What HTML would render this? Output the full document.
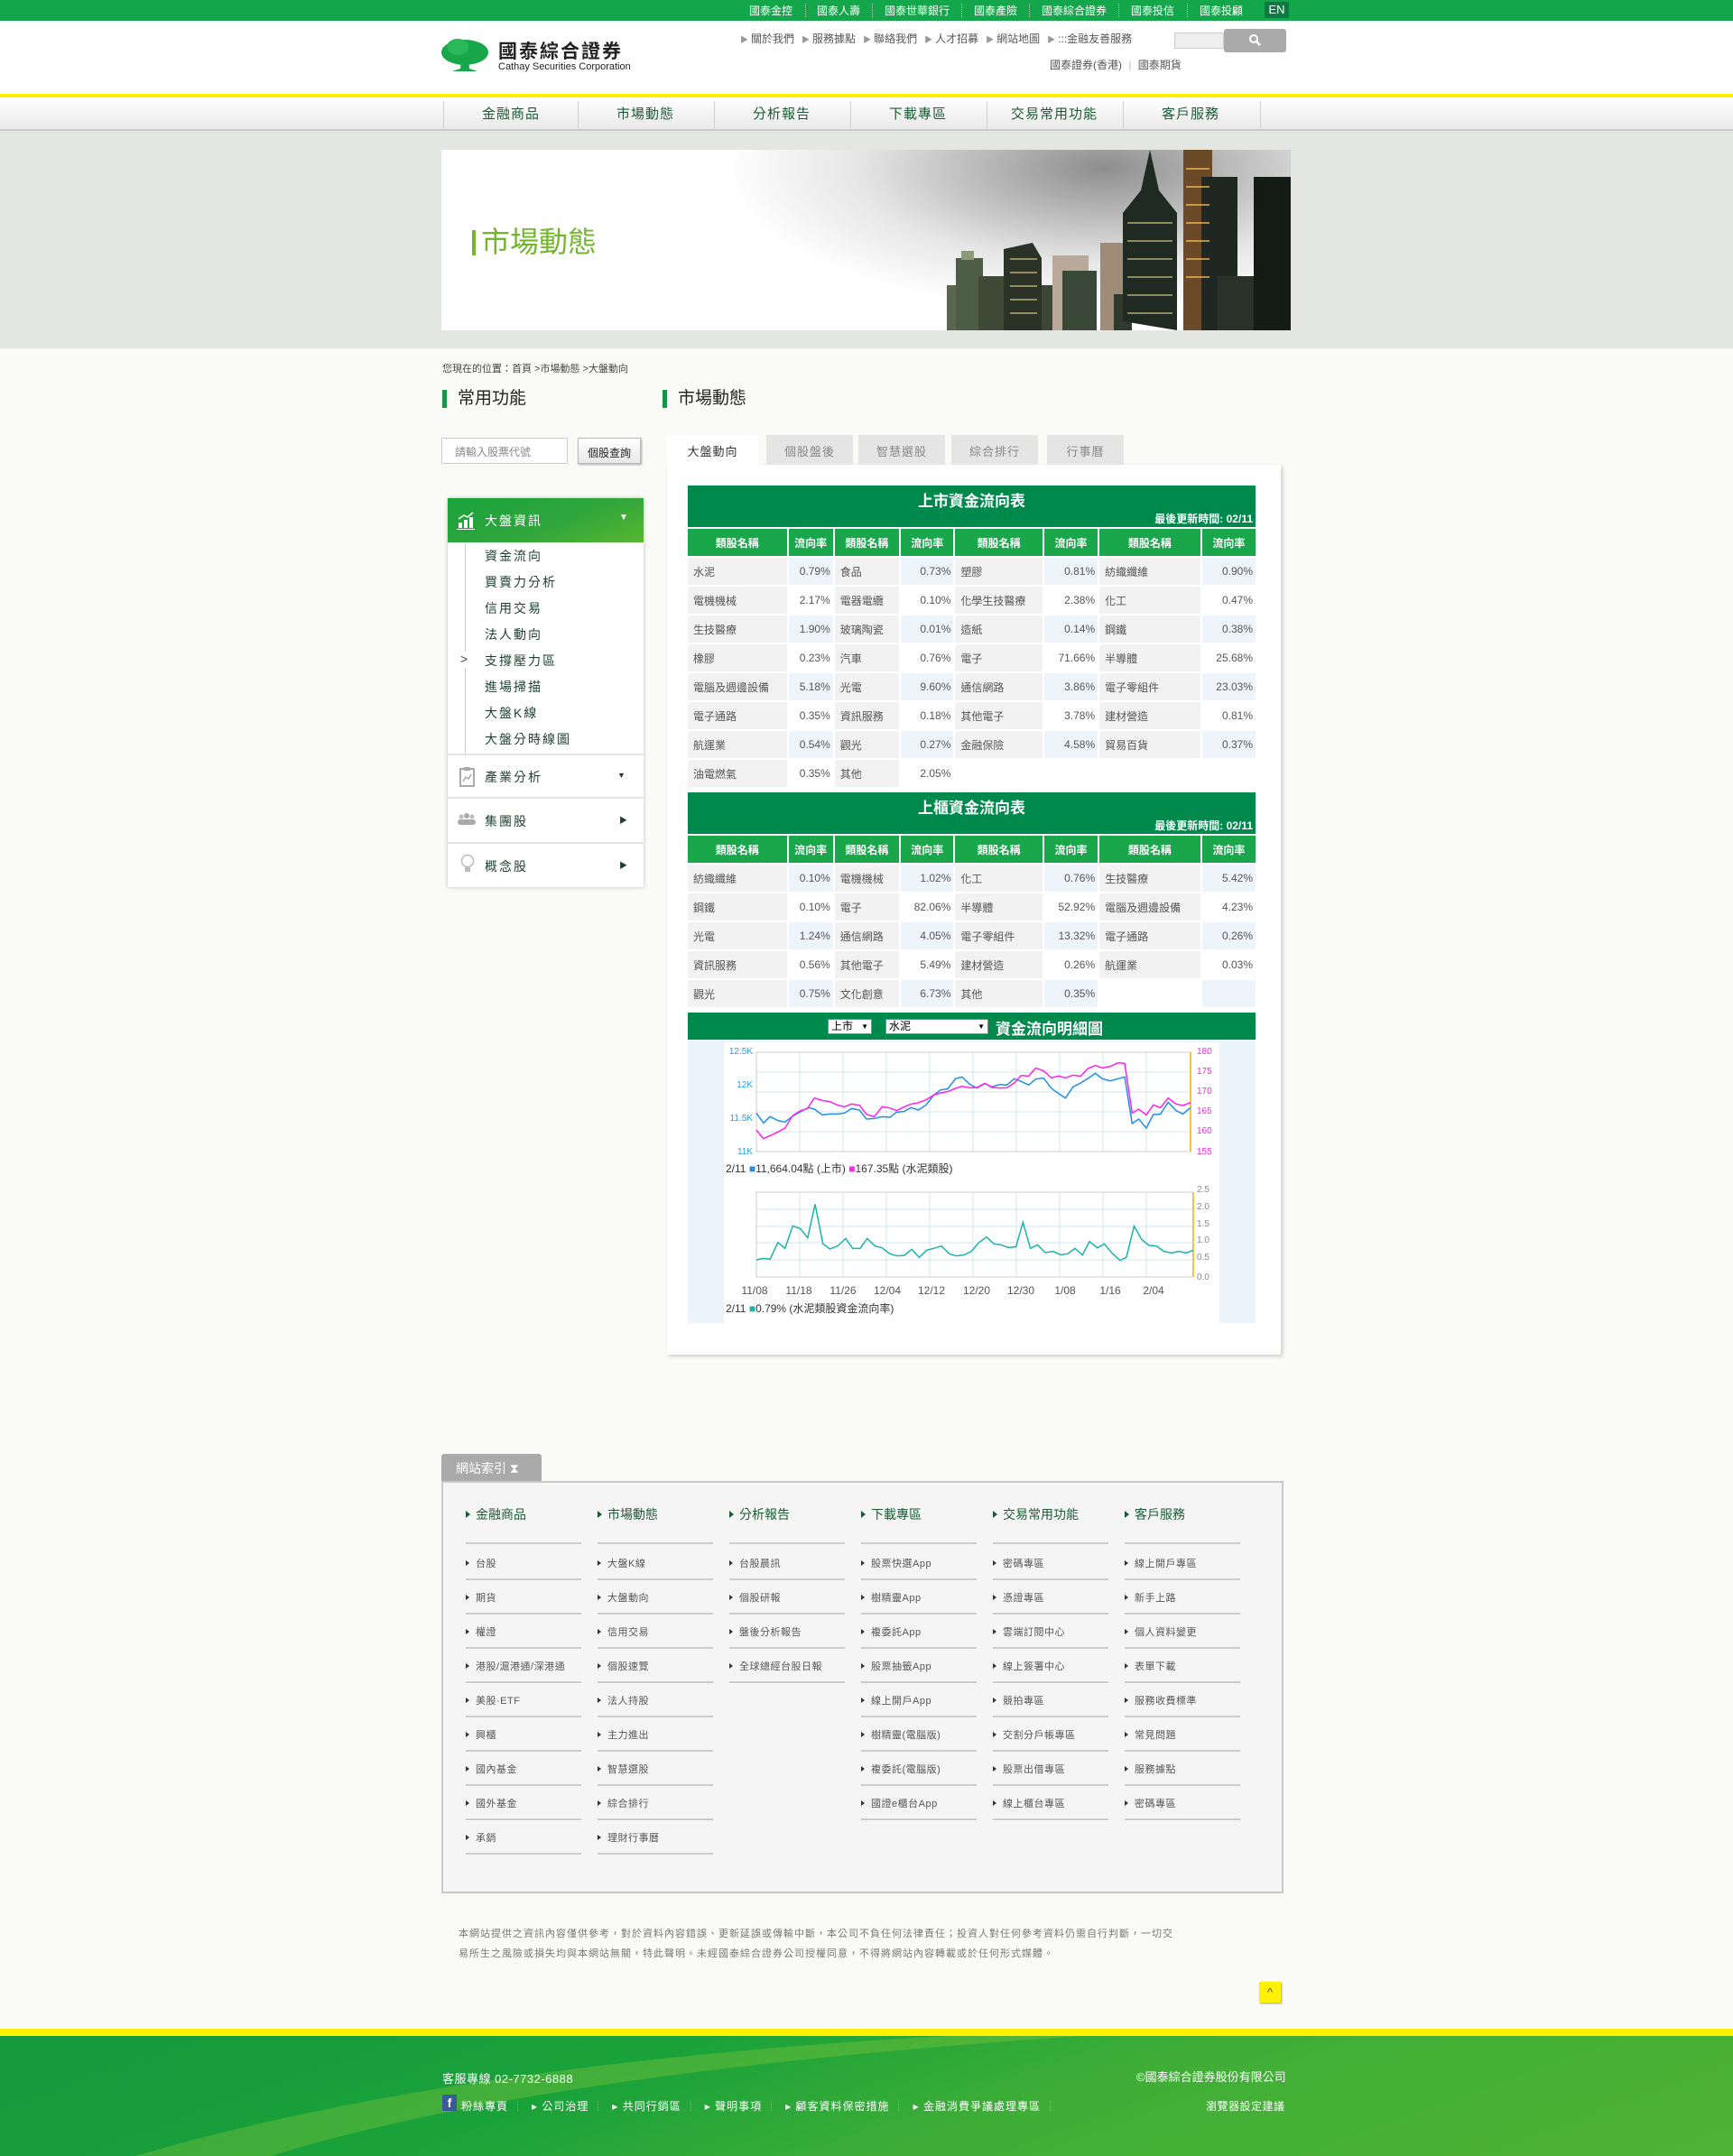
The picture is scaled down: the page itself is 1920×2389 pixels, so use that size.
<!DOCTYPE html>
<html style="overflow:hidden;height:2389px"><head><meta charset="utf-8">
<style>
*{margin:0;padding:0;box-sizing:border-box}
body{width:1920px;height:2389px;overflow:hidden;position:relative;background:#fafaf7;font-family:"Liberation Sans","Noto Sans CJK TC",sans-serif;color:#333}
.a{position:absolute}
.top{left:0;top:0;width:1920px;height:23px;background:#14a64a}
.tl{top:3px;font-size:12px;color:#fff;white-space:nowrap}
.sep{top:4px;width:0;height:15px;border-left:1px dotted #9fd6ad}
.hdr{left:0;top:23px;width:1920px;height:81px;background:#fff}
.ul{font-size:12px;color:#555;white-space:nowrap}
.ul b{font-weight:normal;color:#999;font-size:9px;margin:0 3px 0 8px}
.yel{left:0;top:104px;width:1920px;height:4px;background:#ffef00}
.nav{left:0;top:108px;width:1920px;height:37px;background:linear-gradient(#fff,#e9e9e9);border-bottom:2px solid #ccc}
.ni{top:115px;width:150px;text-align:center;font-size:15px;color:#1d5a36;letter-spacing:1px}
.ns{top:112px;width:1px;height:32px;background:#d0d0d0}
.band{left:0;top:145px;width:1920px;height:241px;background:#e4e6e1}
.ban{left:489px;top:166px;width:941px;height:200px;background:radial-gradient(ellipse 420px 160px at 78% 10%,#8e8e8e 0%,#bdbdbd 35%,#e6e6e6 65%,rgba(255,255,255,0) 100%),#fff;overflow:hidden}
.crumb{left:490px;top:400px;font-size:11px;color:#444}
.st{font-size:19px;color:#222;padding-left:12px;border-left:5px solid #16954a;line-height:20px}
.inp{left:489px;top:485px;width:140px;height:29px;border:1px solid #ccc;background:#fff;font-size:12px;color:#888;padding:6px 0 0 14px}
.btn{left:640px;top:485px;width:70px;height:29px;border:1px solid #bbb;background:linear-gradient(#fff,#e8e8e8);box-shadow:1px 1px 2px #aaa;font-size:12px;color:#222;text-align:center;padding-top:7px}
.side{left:496px;top:552px;width:217px;height:431px;background:#fff;box-shadow:0 0 4px #bbb}
.sh{left:0;top:0;width:217px;height:49px;background:linear-gradient(160deg,#1aa33c 0%,#2fa63c 55%,#59b530 100%);color:#fff;font-size:14px}
.si{left:41px;font-size:14px;color:#1d3f2f;letter-spacing:2px}
.sl{left:0;width:217px;height:2px;background:#e4e4e4}
.tab{top:482px;height:33px;background:#e5e5e5;font-size:13px;color:#888;text-align:center;padding-top:8px;letter-spacing:1px}
.panel{left:739px;top:515px;width:680px;height:986px;background:#fff;box-shadow:2px 2px 4px #ccc}
.ttl{left:762px;width:629px;height:46px;background:#00894c;color:#fff}
.ttl .t{position:absolute;left:0;top:3px;width:100%;text-align:center;font-size:17px;font-weight:bold}
.ttl .u{position:absolute;right:3px;top:28px;font-size:12px;font-weight:bold}
table.d{position:absolute;left:760px;border-collapse:separate;border-spacing:2px;width:633px;table-layout:fixed}
table.d td{height:30px;font-size:12px;color:#555;padding:0 6px;white-space:nowrap;background:#f2f2f2}
table.d tr.h td{background:#1aa64a;color:#fff;font-weight:bold;text-align:center;padding:0}
table.d td.r{text-align:right;padding:0 3px;background:#fff}
table.d tr.o td.r{background:#edf4fb}
table.d td.e{background:#fff}
.cht{left:762px;top:1122px;width:629px;height:30px;background:#00894c}
.sel{top:1129px;height:17px;background:#fff;border:1px solid #888;font-size:12px;color:#000;padding:0 3px;line-height:15px}
.idx{left:489px;top:1641px;width:933px;height:457px;background:#f5f5f5;border:2px solid #c8c8c8}
.ih{font-size:14px;color:#1d5a36;width:128px;height:43px;border-bottom:2px solid #ccc;top:1668px}
.ih:before,.it:before{content:"";display:inline-block;border-left:5px solid #1d5a36;border-top:4px solid transparent;border-bottom:4px solid transparent;margin-right:6px;vertical-align:1px}
.it:before{border-left-color:#333;border-left-width:4px;border-top-width:3.5px;border-bottom-width:3.5px;margin-right:7px}
.it{font-size:11px;color:#555;width:128px;height:38px;border-bottom:2px solid #ccc;padding-top:11px;white-space:nowrap;letter-spacing:.5px}
.disc{left:508px;top:2132px;width:800px;font-size:11px;color:#777;line-height:22px;letter-spacing:1px}
.foot{left:0;top:2256px;width:1920px;height:133px;background:linear-gradient(160deg,#14993c 0%,#1aa23a 35%,#3fae36 60%,#4fb334 100%);overflow:hidden}
.fl{font-size:12px;color:#fff;white-space:nowrap}
</style></head><body>

<div class="a top"></div>
<span class="a tl" style="left:830px">國泰金控</span><span class="a sep" style="left:892px"></span>
<span class="a tl" style="left:905px">國泰人壽</span><span class="a sep" style="left:966px"></span>
<span class="a tl" style="left:980px">國泰世華銀行</span><span class="a sep" style="left:1065px"></span>
<span class="a tl" style="left:1079px">國泰產險</span><span class="a sep" style="left:1140px"></span>
<span class="a tl" style="left:1154px">國泰綜合證券</span><span class="a sep" style="left:1239px"></span>
<span class="a tl" style="left:1253px">國泰投信</span><span class="a sep" style="left:1315px"></span>
<span class="a tl" style="left:1329px">國泰投顧</span>
<div class="a" style="left:1401px;top:2px;width:27px;height:18px;background:#0d7a45;color:#fff;font-size:13px;text-align:center;line-height:18px">EN</div>

<div class="a hdr"></div>
<svg class="a" style="left:487px;top:42px" width="56" height="40" viewBox="0 0 56 40">
<ellipse cx="28" cy="16" rx="26" ry="14" fill="#18a84a"/><ellipse cx="20" cy="10" rx="12" ry="9" fill="#2bb85a"/>
<path d="M24 24 L23 34 L14 37 L42 37 L33 34 L32 24Z" fill="#18a84a"/></svg>
<div class="a" style="left:552px;top:41px;font-size:21px;font-weight:bold;color:#222;letter-spacing:2px">國泰綜合證券</div>
<div class="a" style="left:552px;top:68px;font-size:11px;color:#222">Cathay Securities Corporation</div>
<div class="a ul" style="left:812px;top:34px"><b>▶</b>關於我們<b>▶</b>服務據點<b>▶</b>聯絡我們<b>▶</b>人才招募<b>▶</b>網站地圖<b>▶</b>:::金融友善服務</div>
<div class="a" style="left:1301px;top:36px;width:55px;height:18px;background:#eee;border:1px solid #ccc"></div>
<div class="a" style="left:1356px;top:32px;width:69px;height:26px;background:#aaa;border-radius:3px"></div>
<svg class="a" style="left:1383px;top:37px" width="16" height="16"><circle cx="6" cy="6" r="4" stroke="#fff" stroke-width="2" fill="none"/><path d="M9 9 L13 13" stroke="#fff" stroke-width="2.5"/></svg>
<div class="a ul" style="left:1163px;top:63px">國泰證券(香港) <span style="color:#bbb;margin:0 4px">|</span> 國泰期貨</div>

<div class="a yel"></div>
<div class="a nav"></div>
<div class="a ns" style="left:491px"></div><div class="a ns" style="left:640px"></div><div class="a ns" style="left:791px"></div><div class="a ns" style="left:942px"></div><div class="a ns" style="left:1093px"></div><div class="a ns" style="left:1244px"></div><div class="a ns" style="left:1396px"></div>
<div class="a ni" style="left:491px">金融商品</div>
<div class="a ni" style="left:640px">市場動態</div>
<div class="a ni" style="left:791px">分析報告</div>
<div class="a ni" style="left:942px">下載專區</div>
<div class="a ni" style="left:1093px">交易常用功能</div>
<div class="a ni" style="left:1244px">客戶服務</div>

<div class="a band"></div>
<div class="a ban">
<svg class="a" style="left:560px;top:0" width="381" height="200" viewBox="0 0 381 200">
<rect x="0" y="150" width="10" height="50" fill="#5a6650"/>
<rect x="10" y="120" width="30" height="80" fill="#4d5d45"/><rect x="16" y="112" width="14" height="10" fill="#8a9a7a"/>
<rect x="35" y="140" width="30" height="60" fill="#3e4a36"/>
<path d="M63 110 L95 103 L105 120 L105 200 L63 200Z" fill="#2b3327"/>
<rect x="105" y="150" width="18" height="50" fill="#3b4636"/>
<rect x="117" y="117" width="40" height="83" fill="#b9a99a"/>
<rect x="128" y="134" width="38" height="66" fill="#3a4838"/>
<rect x="170" y="103" width="30" height="97" fill="#a08a78"/>
<rect x="185" y="160" width="20" height="40" fill="#2e3a2c"/>
<path d="M195 190 L195 70 L215 45 L225 0 L235 45 L255 70 L255 200Z" fill="#1f2a22"/>
<rect x="262" y="0" width="32" height="200" fill="#6b4a2a"/>
<rect x="282" y="30" width="40" height="170" fill="#1e2722"/>
<rect x="300" y="140" width="50" height="60" fill="#2a3129"/>
<rect x="340" y="30" width="41" height="170" fill="#141a16"/>
<g fill="#e8d890" opacity=".55">
<rect x="70" y="120" width="30" height="2"/><rect x="70" y="135" width="30" height="2"/><rect x="70" y="150" width="30" height="2"/><rect x="70" y="165" width="30" height="2"/><rect x="70" y="180" width="30" height="2"/>
<rect x="200" y="80" width="50" height="2"/><rect x="200" y="100" width="50" height="2"/><rect x="200" y="120" width="50" height="2"/><rect x="200" y="140" width="50" height="2"/><rect x="200" y="160" width="50" height="2"/><rect x="200" y="180" width="50" height="2"/>
</g>
<g fill="#f0b050" opacity=".75"><rect x="265" y="20" width="26" height="2"/><rect x="265" y="40" width="26" height="2"/><rect x="265" y="60" width="26" height="2"/><rect x="265" y="80" width="26" height="2"/><rect x="265" y="100" width="26" height="2"/><rect x="265" y="120" width="26" height="2"/><rect x="265" y="140" width="26" height="2"/></g>
</svg>
<div class="a" style="left:34px;top:89px;width:4px;height:28px;background:#74b530"></div>
<div class="a" style="left:44px;top:84px;font-size:32px;color:#74b530;line-height:36px">市場動態</div>
</div>

<div class="a crumb">您現在的位置：首頁 &gt;市場動態 &gt;大盤動向</div>
<div class="a st" style="left:490px;top:432px">常用功能</div>
<div class="a st" style="left:734px;top:432px">市場動態</div>
<div class="a inp">請輸入股票代號</div>
<div class="a btn">個股查詢</div>

<div class="a side">
<div class="a sh"><svg class="a" style="left:10px;top:15px" width="22" height="20"><rect x="2" y="12" width="4" height="6" fill="#fff"/><rect x="8" y="9" width="4" height="9" fill="#fff"/><rect x="14" y="6" width="4" height="12" fill="#fff"/><path d="M2 8 L8 4 L12 6 L18 1" stroke="#fff" stroke-width="1.5" fill="none"/><rect x="0" y="19" width="20" height="1" fill="#fff"/></svg>
<span class="a" style="left:41px;top:15px;letter-spacing:2px">大盤資訊</span><span class="a" style="left:190px;top:16px;font-size:10px">▼</span></div>
<div class="a" style="left:19px;top:49px;width:1px;height:235px;background:#ccc"></div>
<div class="a" style="left:14px;top:170px;width:14px;height:18px;background:#fff;color:#444;font-size:14px">&gt;</div>
<div class="a si" style="top:54px">資金流向</div>
<div class="a si" style="top:83px">買賣力分析</div>
<div class="a si" style="top:112px">信用交易</div>
<div class="a si" style="top:141px">法人動向</div>
<div class="a si" style="top:170px">支撐壓力區</div>
<div class="a si" style="top:199px">進場掃描</div>
<div class="a si" style="top:228px">大盤K線</div>
<div class="a si" style="top:257px">大盤分時線圖</div>
<div class="a sl" style="top:283px"></div>
<svg class="a" style="left:12px;top:297px" width="20" height="24"><rect x="2" y="3" width="15" height="19" fill="none" stroke="#aaa" stroke-width="2"/><rect x="6" y="1" width="7" height="4" fill="#aaa"/><path d="M5 17 L8 12 L11 14 L14 9" stroke="#aaa" stroke-width="1.5" fill="none"/></svg>
<div class="a si" style="top:299px">產業分析</div><span class="a" style="left:188px;top:302px;font-size:9px;color:#1d3f2f">▼</span>
<div class="a sl" style="top:331px"></div>
<svg class="a" style="left:10px;top:349px" width="22" height="14"><circle cx="5" cy="4" r="2.5" fill="#bbb"/><circle cx="11" cy="3" r="3" fill="#aaa"/><circle cx="17" cy="4" r="2.5" fill="#bbb"/><rect x="1" y="7" width="20" height="6" rx="3" fill="#aaa"/></svg>
<div class="a si" style="top:348px">集團股</div><span class="a" style="left:190px;top:350px;font-size:9px;color:#1d3f2f">▶</span>
<div class="a sl" style="top:381px"></div>
<svg class="a" style="left:14px;top:394px" width="16" height="24"><circle cx="8" cy="8" r="6.5" fill="none" stroke="#bbb" stroke-width="1.5"/><rect x="5" y="15" width="6" height="5" fill="#bbb"/></svg>
<div class="a si" style="top:398px">概念股</div><span class="a" style="left:190px;top:400px;font-size:9px;color:#1d3f2f">▶</span>
</div>

<div class="a panel"></div>
<div class="a tab" style="left:739px;width:101px;background:#fff;color:#333;height:34px">大盤動向</div>
<div class="a tab" style="left:849px;width:96px">個股盤後</div>
<div class="a tab" style="left:951px;width:96px">智慧選股</div>
<div class="a tab" style="left:1054px;width:96px">綜合排行</div>
<div class="a tab" style="left:1160px;width:85px">行事曆</div>

<div class="a ttl" style="top:538px"><div class="t">上市資金流向表</div><div class="u">最後更新時間: 02/11</div></div>
<table class="d" style="top:584px">
<colgroup><col style="width:109px"><col style="width:49px"><col style="width:71px"><col style="width:58px"><col style="width:96px"><col style="width:59px"><col style="width:111px"><col style="width:59px"></colgroup>
<tr class="h"><td>類股名稱</td><td>流向率</td><td>類股名稱</td><td>流向率</td><td>類股名稱</td><td>流向率</td><td>類股名稱</td><td>流向率</td></tr>
<tr class="o"><td>水泥</td><td class="r">0.79%</td><td>食品</td><td class="r">0.73%</td><td>塑膠</td><td class="r">0.81%</td><td>紡織纖維</td><td class="r">0.90%</td></tr>
<tr><td>電機機械</td><td class="r">2.17%</td><td>電器電纜</td><td class="r">0.10%</td><td>化學生技醫療</td><td class="r">2.38%</td><td>化工</td><td class="r">0.47%</td></tr>
<tr class="o"><td>生技醫療</td><td class="r">1.90%</td><td>玻璃陶瓷</td><td class="r">0.01%</td><td>造紙</td><td class="r">0.14%</td><td>鋼鐵</td><td class="r">0.38%</td></tr>
<tr><td>橡膠</td><td class="r">0.23%</td><td>汽車</td><td class="r">0.76%</td><td>電子</td><td class="r">71.66%</td><td>半導體</td><td class="r">25.68%</td></tr>
<tr class="o"><td>電腦及週邊設備</td><td class="r">5.18%</td><td>光電</td><td class="r">9.60%</td><td>通信網路</td><td class="r">3.86%</td><td>電子零組件</td><td class="r">23.03%</td></tr>
<tr><td>電子通路</td><td class="r">0.35%</td><td>資訊服務</td><td class="r">0.18%</td><td>其他電子</td><td class="r">3.78%</td><td>建材營造</td><td class="r">0.81%</td></tr>
<tr class="o"><td>航運業</td><td class="r">0.54%</td><td>觀光</td><td class="r">0.27%</td><td>金融保險</td><td class="r">4.58%</td><td>貿易百貨</td><td class="r">0.37%</td></tr>
<tr><td>油電燃氣</td><td class="r">0.35%</td><td>其他</td><td class="r">2.05%</td><td class="e"></td><td class="r"></td><td class="e"></td><td class="r"></td></tr>
</table>

<div class="a ttl" style="top:878px"><div class="t">上櫃資金流向表</div><div class="u">最後更新時間: 02/11</div></div>
<table class="d" style="top:924px">
<colgroup><col style="width:109px"><col style="width:49px"><col style="width:71px"><col style="width:58px"><col style="width:96px"><col style="width:59px"><col style="width:111px"><col style="width:59px"></colgroup>
<tr class="h"><td>類股名稱</td><td>流向率</td><td>類股名稱</td><td>流向率</td><td>類股名稱</td><td>流向率</td><td>類股名稱</td><td>流向率</td></tr>
<tr class="o"><td>紡織纖維</td><td class="r">0.10%</td><td>電機機械</td><td class="r">1.02%</td><td>化工</td><td class="r">0.76%</td><td>生技醫療</td><td class="r">5.42%</td></tr>
<tr><td>鋼鐵</td><td class="r">0.10%</td><td>電子</td><td class="r">82.06%</td><td>半導體</td><td class="r">52.92%</td><td>電腦及週邊設備</td><td class="r">4.23%</td></tr>
<tr class="o"><td>光電</td><td class="r">1.24%</td><td>通信網路</td><td class="r">4.05%</td><td>電子零組件</td><td class="r">13.32%</td><td>電子通路</td><td class="r">0.26%</td></tr>
<tr><td>資訊服務</td><td class="r">0.56%</td><td>其他電子</td><td class="r">5.49%</td><td>建材營造</td><td class="r">0.26%</td><td>航運業</td><td class="r">0.03%</td></tr>
<tr class="o"><td>觀光</td><td class="r">0.75%</td><td>文化創意</td><td class="r">6.73%</td><td>其他</td><td class="r">0.35%</td><td class="e"></td><td class="r" style="background:#edf4fb"></td></tr>
</table>

<div class="a cht"></div>
<div class="a sel" style="left:917px;width:49px">上市<span style="float:right;font-size:8px">▼</span></div>
<div class="a sel" style="left:981px;width:114px">水泥<span style="float:right;font-size:8px">▼</span></div>
<div class="a" style="left:1103px;top:1126px;font-size:17px;font-weight:bold;color:#fff">資金流向明細圖</div>

<svg class="a" style="left:762px;top:1152px" width="629" height="314" font-family="Liberation Sans, Noto Sans CJK TC, sans-serif">
<rect width="629" height="314" fill="#ebf3fb"/>
<rect x="40" y="3" width="549" height="311" fill="#fff"/>
<g stroke="#d6e6ef" stroke-width="1">
<path d="M124 14V124M172 14V124M220 14V124M268 14V124M316 14V124M364 14V124M412 14V124M460 14V124M508 14V124"/>
<path d="M76 36H557M76 58H557M76 80H557M76 102H557"/>
<path d="M124 169V263M172 169V263M220 169V263M268 169V263M316 169V263M364 169V263M412 169V263M460 169V263M508 169V263"/>
<path d="M76 188H560M76 207H560M76 225H560M76 244H560"/>
</g>
<rect x="76" y="14" width="481" height="110" fill="none" stroke="#ccc"/>
<rect x="76" y="169" width="484" height="94" fill="none" stroke="#ccc"/>
<path d="M557 14V124" stroke="#f2c444" stroke-width="2"/>
<path d="M560 169V263" stroke="#f2c444" stroke-width="2"/>
<svg x="76" y="14" width="481" height="110" viewBox="227 168 1108 330" preserveAspectRatio="none" overflow="visible">
<polyline vector-effect="non-scaling-stroke" fill="none" stroke="#1f8fe5" stroke-width="1.5" points="227,370 245,403 262,382 282,395 300,400 320,380 340,365 360,352 375,357 395,376 415,373 435,373 452,370 470,355 490,360 508,390 528,388 548,382 568,384 585,367 603,365 622,352 640,360 660,343 680,310 697,293 715,290 735,256 752,250 772,275 790,287 810,272 828,283 848,275 866,277 885,256 903,265 922,277 940,257 960,254 980,288 998,305 1016,320 1035,283 1055,270 1073,255 1092,238 1110,256 1130,263 1150,256 1167,250 1186,405 1203,390 1222,420 1240,375 1258,374 1278,334 1298,362 1316,373 1335,352"/>
<polyline vector-effect="non-scaling-stroke" fill="none" stroke="#ff22ee" stroke-width="1.5" points="227,427 245,455 262,445 282,433 300,420 320,378 340,362 357,355 375,320 395,328 415,332 435,344 452,349 470,340 490,344 508,374 528,382 548,349 568,353 585,362 603,350 622,340 640,336 660,326 680,310 697,303 715,299 735,288 752,281 772,286 790,285 810,271 828,285 848,287 866,286 885,270 903,245 922,247 940,220 960,230 980,253 998,247 1016,253 1035,244 1055,247 1073,222 1092,212 1110,220 1130,215 1150,203 1167,205 1186,370 1203,357 1222,376 1240,343 1258,352 1278,320 1298,340 1316,345 1335,335"/>
</svg>
<svg x="76" y="169" width="484" height="94" viewBox="227 633 1116 282" preserveAspectRatio="none" overflow="visible">
<polyline vector-effect="non-scaling-stroke" fill="none" stroke="#1ab3ad" stroke-width="1.5" points="227,858 245,853 262,856 282,800 300,820 320,745 340,755 358,785 377,673 397,805 415,822 435,812 455,787 473,820 492,820 510,787 530,812 548,818 568,838 587,845 605,843 624,823 643,850 662,826 680,820 700,812 720,838 738,845 757,842 776,830 796,800 815,782 834,805 852,808 870,817 890,815 908,733 927,820 945,808 965,834 985,830 1004,841 1022,838 1041,820 1060,842 1078,797 1098,818 1116,805 1135,835 1156,860 1172,850 1192,746 1211,790 1230,810 1249,812 1268,830 1288,835 1306,830 1325,835 1343,826"/>
</svg>
<g font-size="10" fill="#2d9ce8" text-anchor="end"><text x="72" y="16">12.5K</text><text x="72" y="53">12K</text><text x="72" y="90">11.5K</text><text x="72" y="127">11K</text></g>
<g font-size="10" fill="#ff22ee"><text x="564" y="16">180</text><text x="564" y="38">175</text><text x="564" y="60">170</text><text x="564" y="82">165</text><text x="564" y="104">160</text><text x="564" y="127">155</text></g>
<g font-size="10" fill="#888"><text x="564" y="169">2.5</text><text x="564" y="188">2.0</text><text x="564" y="207">1.5</text><text x="564" y="225">1.0</text><text x="564" y="244">0.5</text><text x="564" y="266">0.0</text></g>
<g font-size="12" fill="#555" text-anchor="middle"><text x="74" y="282">11/08</text><text x="123" y="282">11/18</text><text x="172" y="282">11/26</text><text x="221" y="282">12/04</text><text x="270" y="282">12/12</text><text x="320" y="282">12/20</text><text x="369" y="282">12/30</text><text x="418" y="282">1/08</text><text x="468" y="282">1/16</text><text x="516" y="282">2/04</text></g>
<text x="42" y="147" font-size="12" fill="#333">2/11 <tspan fill="#1f8fe5">■</tspan>11,664.04點 (上市) <tspan fill="#ff22ee">■</tspan>167.35點 (水泥類股)</text>
<text x="42" y="302" font-size="12" fill="#333">2/11 <tspan fill="#1ab3ad">■</tspan>0.79% (水泥類股資金流向率)</text>
</svg>

<div class="a" style="left:489px;top:1611px;width:111px;height:32px;background:#aaa;border-radius:3px 3px 0 0;color:#fff;font-size:14px;padding:6px 0 0 16px">網站索引 ⧗</div>
<div class="a idx"></div>

<div class="a ih" style="left:516px">金融商品</div>
<div class="a ih" style="left:662px">市場動態</div>
<div class="a ih" style="left:808px">分析報告</div>
<div class="a ih" style="left:954px">下載專區</div>
<div class="a ih" style="left:1100px">交易常用功能</div>
<div class="a ih" style="left:1246px">客戶服務</div>

<div class="a" style="left:516px;top:1713px">
<div class="it">台股</div><div class="it">期貨</div><div class="it">權證</div><div class="it">港股/滬港通/深港通</div><div class="it">美股·ETF</div><div class="it">興櫃</div><div class="it">國內基金</div><div class="it">國外基金</div><div class="it">承銷</div></div>
<div class="a" style="left:662px;top:1713px">
<div class="it">大盤K線</div><div class="it">大盤動向</div><div class="it">信用交易</div><div class="it">個股速覽</div><div class="it">法人持股</div><div class="it">主力進出</div><div class="it">智慧選股</div><div class="it">綜合排行</div><div class="it">理財行事曆</div></div>
<div class="a" style="left:808px;top:1713px">
<div class="it">台股晨訊</div><div class="it">個股研報</div><div class="it">盤後分析報告</div><div class="it">全球總經台股日報</div></div>
<div class="a" style="left:954px;top:1713px">
<div class="it">股票快選App</div><div class="it">樹精靈App</div><div class="it">複委託App</div><div class="it">股票抽籤App</div><div class="it">線上開戶App</div><div class="it">樹精靈(電腦版)</div><div class="it">複委託(電腦版)</div><div class="it">國證e櫃台App</div></div>
<div class="a" style="left:1100px;top:1713px">
<div class="it">密碼專區</div><div class="it">憑證專區</div><div class="it">雲端訂閱中心</div><div class="it">線上簽署中心</div><div class="it">競拍專區</div><div class="it">交割分戶帳專區</div><div class="it">股票出借專區</div><div class="it">線上櫃台專區</div></div>
<div class="a" style="left:1246px;top:1713px">
<div class="it">線上開戶專區</div><div class="it">新手上路</div><div class="it">個人資料變更</div><div class="it">表單下載</div><div class="it">服務收費標準</div><div class="it">常見問題</div><div class="it">服務據點</div><div class="it">密碼專區</div></div>

<div class="a disc">本網站提供之資訊內容僅供參考，對於資料內容錯誤、更新延誤或傳輸中斷，本公司不負任何法律責任；投資人對任何參考資料仍需自行判斷，一切交易所生之風險或損失均與本網站無關，特此聲明。未經國泰綜合證券公司授權同意，不得將網站內容轉載或於任何形式媒體。</div>
<div class="a" style="left:1395px;top:2196px;width:24px;height:23px;background:#fff200;box-shadow:1px 1px 2px #999;text-align:center;font-size:13px;color:#555;line-height:24px">^</div>

<div class="a" style="left:0;top:2248px;width:1920px;height:8px;background:#fff200"></div>
<div class="a foot"><svg class="a" style="left:0;top:0" width="1920" height="133"><path d="M150 133 Q500 30 1050 0 L1200 0 Q600 40 300 133Z" fill="#8cc83a" opacity=".35"/></svg></div>
<div class="a fl" style="left:490px;top:2293px;font-size:13px;letter-spacing:.5px">客服專線 02-7732-6888</div>
<div class="a fl" style="left:1259px;top:2291px;font-size:13px">©國泰綜合證券股份有限公司</div>
<div class="a fl" style="left:1336px;top:2325px;letter-spacing:.5px">瀏覽器設定建議</div>
<div class="a" style="left:490px;top:2321px;width:16px;height:18px;background:#3b5998;color:#fff;font-weight:bold;font-size:14px;text-align:center;line-height:19px">f</div>
<div class="a fl" style="left:511px;top:2325px;letter-spacing:1px">粉絲專頁 <span style="color:#8fd08f">┊</span> &nbsp;▸ 公司治理 <span style="color:#8fd08f">┊</span> &nbsp;▸ 共同行銷區 <span style="color:#8fd08f">┊</span> &nbsp;▸ 聲明事項 <span style="color:#8fd08f">┊</span> &nbsp;▸ 顧客資料保密措施 <span style="color:#8fd08f">┊</span> &nbsp;▸ 金融消費爭議處理專區 <span style="color:#8fd08f">┊</span></div>
</body></html>
